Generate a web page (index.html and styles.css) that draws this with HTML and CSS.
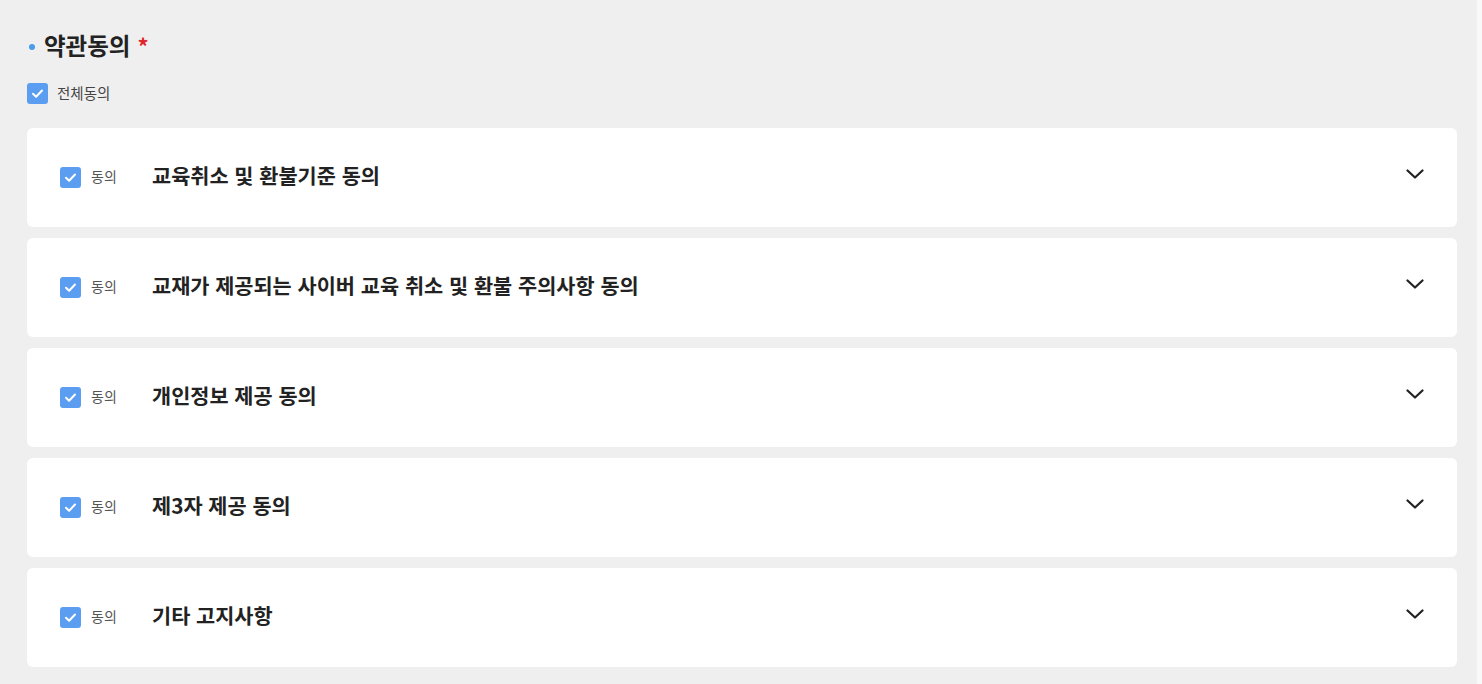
FILE: index.html
```html
<!DOCTYPE html>
<html lang="ko">
<head>
<meta charset="utf-8">
<link rel="stylesheet" href="styles.css">
</head>
<body>
<div class="wrap">
  <h2 class="heading"><span class="dot"></span>약관동의<span class="req">*</span></h2>
  <label class="all">
    <span class="cb"><svg viewBox="0 0 21 21"><path d="M6 10.8l3.1 3 5.9-6.3" fill="none" stroke="#fff" stroke-width="2" stroke-linecap="round" stroke-linejoin="round"/></svg></span>
    <span class="all-text">전체동의</span>
  </label>
  <div class="list">
    <div class="card">
      <span class="cb"><svg viewBox="0 0 21 21"><path d="M6 10.8l3.1 3 5.9-6.3" fill="none" stroke="#fff" stroke-width="2" stroke-linecap="round" stroke-linejoin="round"/></svg></span>
      <span class="agree">동의</span>
      <span class="title">교육취소 및 환불기준 동의</span>
      <svg class="chev" viewBox="0 0 18 10"><path d="M1.5 1.5l7.5 7 7.5-7" fill="none" stroke="#222" stroke-width="2.2" stroke-linecap="round" stroke-linejoin="round"/></svg>
    </div>
    <div class="card">
      <span class="cb"><svg viewBox="0 0 21 21"><path d="M6 10.8l3.1 3 5.9-6.3" fill="none" stroke="#fff" stroke-width="2" stroke-linecap="round" stroke-linejoin="round"/></svg></span>
      <span class="agree">동의</span>
      <span class="title">교재가 제공되는 사이버 교육 취소 및 환불 주의사항 동의</span>
      <svg class="chev" viewBox="0 0 18 10"><path d="M1.5 1.5l7.5 7 7.5-7" fill="none" stroke="#222" stroke-width="2.2" stroke-linecap="round" stroke-linejoin="round"/></svg>
    </div>
    <div class="card">
      <span class="cb"><svg viewBox="0 0 21 21"><path d="M6 10.8l3.1 3 5.9-6.3" fill="none" stroke="#fff" stroke-width="2" stroke-linecap="round" stroke-linejoin="round"/></svg></span>
      <span class="agree">동의</span>
      <span class="title">개인정보 제공 동의</span>
      <svg class="chev" viewBox="0 0 18 10"><path d="M1.5 1.5l7.5 7 7.5-7" fill="none" stroke="#222" stroke-width="2.2" stroke-linecap="round" stroke-linejoin="round"/></svg>
    </div>
    <div class="card">
      <span class="cb"><svg viewBox="0 0 21 21"><path d="M6 10.8l3.1 3 5.9-6.3" fill="none" stroke="#fff" stroke-width="2" stroke-linecap="round" stroke-linejoin="round"/></svg></span>
      <span class="agree">동의</span>
      <span class="title">제3자 제공 동의</span>
      <svg class="chev" viewBox="0 0 18 10"><path d="M1.5 1.5l7.5 7 7.5-7" fill="none" stroke="#222" stroke-width="2.2" stroke-linecap="round" stroke-linejoin="round"/></svg>
    </div>
    <div class="card">
      <span class="cb"><svg viewBox="0 0 21 21"><path d="M6 10.8l3.1 3 5.9-6.3" fill="none" stroke="#fff" stroke-width="2" stroke-linecap="round" stroke-linejoin="round"/></svg></span>
      <span class="agree">동의</span>
      <span class="title">기타 고지사항</span>
      <svg class="chev" viewBox="0 0 18 10"><path d="M1.5 1.5l7.5 7 7.5-7" fill="none" stroke="#222" stroke-width="2.2" stroke-linecap="round" stroke-linejoin="round"/></svg>
    </div>
  </div>
</div>
</body>
</html>
```
FILE: styles.css
```css
html, body {
  margin: 0;
  padding: 0;
  background: #efefef;
  font-family: "Noto Sans CJK KR", "Noto Sans", sans-serif;
  color: #222;
}
body {
  min-height: 100vh;
  box-sizing: border-box;
  border-right: 5px solid #f9f9f9;
}
.wrap {
  width: 1430px;
  margin-left: 27px;
  padding-top: 30px;
}
.heading {
  margin: 0;
  display: flex;
  align-items: center;
  height: 30px;
  font-size: 23.5px;
  font-weight: 700;
  color: #222;
}
.dot {
  width: 6px;
  height: 6px;
  border-radius: 50%;
  background: #4a9be8;
  margin: 3px 9px 0 2px;
}
.req {
  color: #e0262b;
  margin-left: 7px;
  font-size: 22px;
}
.all {
  display: flex;
  align-items: center;
  margin-top: 23px;
  height: 21px;
}
.cb {
  width: 21px;
  height: 21px;
  border-radius: 3px;
  background: #5b9ef1;
  display: flex;
  flex-shrink: 0;
}
.cb svg {
  width: 21px;
  height: 21px;
}
.all-text {
  margin-left: 9px;
  margin-bottom: 2px;
  font-size: 14.5px;
  color: #444;
}
.list {
  margin-top: 24px;
  display: flex;
  flex-direction: column;
  gap: 11px;
}
.card {
  background: #fff;
  border-radius: 6px;
  height: 99px;
  display: flex;
  align-items: center;
  padding: 0 33px;
}
.agree {
  margin-left: 10px;
  margin-bottom: 3px;
  width: 61px;
  font-size: 14px;
  color: #555;
}
.title {
  font-size: 20.8px;
  font-weight: 700;
  color: #222;
  flex: 1;
  margin-bottom: 5px;
}
.chev {
  width: 18px;
  height: 10px;
  margin-top: -7px;
}
```
